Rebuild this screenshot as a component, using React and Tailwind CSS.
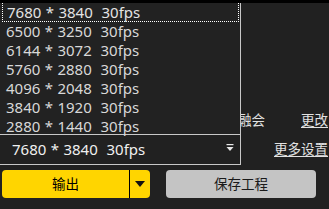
import React from "react";

const rows = [
  "7680 * 3840  30fps",
  "6500 * 3250  30fps",
  "6144 * 3072  30fps",
  "5760 * 2880  30fps",
  "4096 * 2048  30fps",
  "3840 * 1920  30fps",
  "2880 * 1440  30fps",
];

const font = { fontFamily: '"Noto Sans", "Noto Sans CJK SC", sans-serif' };

export default function App() {
  return (
    <div
      className="w-[329px] h-[209px] bg-[#212121] overflow-hidden flex flex-col text-[15px] text-[#e2e2e2]"
      style={font}
    >
      <div className="h-[3px] bg-black shrink-0" />
      <div className="relative h-[132px] shrink-0">
        <div className="absolute left-0 right-0 top-[109px] flex items-center h-[18px] text-[13.5px]">
          <span className="ml-[238px] leading-none">融会</span>
          <span className="ml-auto mr-[1px] underline underline-offset-2 leading-none">更改</span>
        </div>
        <div className="absolute left-0 top-0 w-[241px] h-[132px] bg-[#222222] border-r border-b border-[#c8c8c8] flex flex-col">
          {rows.map((r, i) => (
            <div
              key={r}
              className={
                "h-[19px] shrink-0 flex items-center pl-[4px] ml-[2px] mr-[1px] whitespace-pre leading-none [word-spacing:0.5px] " +
                (i === 0 ? "border border-dotted border-white h-[18px] border-t-0 text-[#e4e4e4]" : "text-[#d8d8d8]")
              }
            >
              {r}
            </div>
          ))}
        </div>
      </div>
      <div className="h-[30px] flex items-center shrink-0">
        <div className="w-[241px] h-[30px] border-r border-b border-[#c8c8c8] flex items-center pl-[12px] pr-[6px] whitespace-pre">
          <span className="text-[#f0f0f0] [word-spacing:0.5px]">7680 * 3840  30fps</span>
          <svg className="ml-auto -mt-[3px]" width="8" height="8" viewBox="0 0 8 8">
            <rect x="0.5" y="0" width="7" height="1.2" fill="#e8e8e8" />
            <path d="M0.5 3 L7.5 3 L4 7 Z" fill="#e8e8e8" />
          </svg>
        </div>
        <span className="ml-auto mr-[1px] underline underline-offset-2 leading-none text-[13.5px]">更多设置</span>
      </div>
      <div className="flex items-start pt-[5px] pl-[2px] gap-[16px] text-[13.5px]">
        <div className="w-[148px] h-[28px] rounded-[4px] bg-[#ffd500] flex text-black">
          <div className="w-[128px] flex items-center justify-center border-r-[1.5px] border-black">
            输出
          </div>
          <div className="flex-1 flex items-center justify-center">
            <svg width="10" height="7" viewBox="0 0 10 7">
              <path d="M0 0 L10 0 L5 6 Z" fill="#111" />
            </svg>
          </div>
        </div>
        <div className="w-[150px] h-[28px] rounded-[4px] bg-[#c4c4c4] flex items-center justify-center text-[#1a1a1a]">
          保存工程
        </div>
      </div>
    </div>
  );
}
